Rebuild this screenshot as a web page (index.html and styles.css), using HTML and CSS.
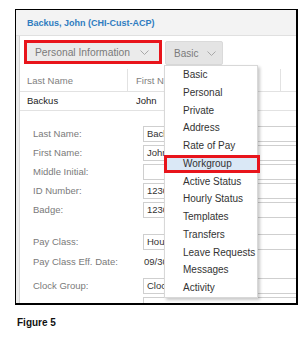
FILE: index.html
```html
<!DOCTYPE html>
<html>
<head>
  <meta charset="utf-8">
  <link rel="stylesheet" href="styles.css">
</head>
<body>
  <div class="shot">
    <div class="frame">
      <header class="titlebar">Backus, John (CHI-Cust-ACP)</header>
      <div class="panel">
        <div class="gutter"></div>
        <main class="content">
          <div class="toolbar">
            <div class="callout">
              <div class="select select-wide">
                <span>Personal Information</span>
                <svg class="chev" width="9" height="5" viewBox="0 0 9 5"><polyline points="0.5,0.5 4.5,4.5 8.5,0.5" fill="none" stroke="#a8a8a8"/></svg>
              </div>
            </div>
            <div class="select select-basic">
              <span>Basic</span>
              <svg class="chev" width="9" height="5" viewBox="0 0 9 5"><polyline points="0.5,0.5 4.5,4.5 8.5,0.5" fill="none" stroke="#a8a8a8"/></svg>
            </div>
          </div>

          <div class="grid-head">
            <div class="cell col-last">Last Name</div>
            <div class="cell col-first">First Name</div>
            <div class="cell col-rest"></div>
          </div>
          <div class="grid-row">
            <div class="cell col-last">Backus</div>
            <div class="cell col-first">John</div>
            <div class="cell col-rest"></div>
          </div>

          <div class="form">
            <div class="row"><label>Last Name:</label><span class="field">Backus</span></div>
            <div class="row"><label>First Name:</label><span class="field">John</span></div>
            <div class="row"><label>Middle Initial:</label><span class="field"></span></div>
            <div class="row"><label>ID Number:</label><span class="field">123045</span></div>
            <div class="row"><label>Badge:</label><span class="field">123045</span></div>
            <div class="row row-pay"><label>Pay Class:</label><span class="field">Hourly</span></div>
            <div class="row row-date"><label>Pay Class Eff. Date:</label><span class="value">09/30/15</span></div>
            <div class="row row-clock"><label>Clock Group:</label><span class="field">Clock 1</span></div>
            <div class="row"><label></label><span class="field"></span></div>
          </div>
        </main>
      </div>

      <ul class="menu">
        <li>Basic</li>
        <li>Personal</li>
        <li>Private</li>
        <li>Address</li>
        <li>Rate of Pay</li>
        <li class="active">Workgroup</li>
        <li>Active Status</li>
        <li>Hourly Status</li>
        <li>Templates</li>
        <li>Transfers</li>
        <li>Leave Requests</li>
        <li>Messages</li>
        <li>Activity</li>
      </ul>
    </div>
    <p class="caption">Figure 5</p>
  </div>
</body>
</html>
```

FILE: styles.css
```css
body {
  margin: 0;
  background: #fff;
  font-family: "Liberation Sans", Arial, sans-serif;
  color: #333;
}

.shot {
  padding: 9px 0 0 15px;
}

/* screenshot frame */
.frame {
  position: relative;
  width: 283px;
  height: 296px;
  box-sizing: border-box;
  border: 1px solid #000;
  border-right-width: 2px;
  border-bottom-width: 2px;
  overflow: hidden;
}

.titlebar {
  height: 25px;
  line-height: 26px;
  padding-left: 11px;
  background: #f3f3f3;
  border-bottom: 1px solid #e0e0e0;
  color: #2f7cc0;
  font-size: 9px;
  font-weight: bold;
}

.panel {
  display: flex;
  height: 100%;
}

.gutter {
  width: 3px;
  flex: none;
  background: #ececec;
  border-right: 1px solid #d4d4d4;
}

.content {
  flex: 1;
  min-width: 0;
}

/* toolbar */
.toolbar {
  display: flex;
  align-items: flex-start;
  gap: 3px;
  padding: 4px 0 0 4px;
  margin-bottom: 4px;
}

.callout {
  border: 3px solid #e8141b;
  width: 138px;
  box-sizing: border-box;
}

.select {
  display: flex;
  align-items: center;
  justify-content: space-between;
  box-sizing: border-box;
  color: #7a7a7a;
}

.select-wide {
  height: 18px;
  padding: 0 10px 0 8px;
  background: #ebebeb;
  font-size: 10.3px;
}

.select-basic {
  margin-top: 1px;
  width: 58px;
  height: 24px;
  padding: 0 6px 0 8px;
  background: #e4e4e4;
  border: 1px solid #dadada;
  border-radius: 2px;
  font-size: 10px;
}

.chev {
  display: block;
}

/* grid */
.grid-head,
.grid-row {
  display: flex;
  font-size: 9.5px;
}

.grid-head {
  height: 22px;
  line-height: 24px;
  border-bottom: 1px solid #e2e2e2;
  color: #808080;
}

.grid-row {
  height: 18px;
  line-height: 18px;
  border-bottom: 1px solid #e2e2e2;
  color: #222;
}

.cell {
  box-sizing: border-box;
  white-space: nowrap;
  overflow: hidden;
}

.col-last {
  width: 108px;
  padding-left: 7px;
}

.col-first {
  width: 153px;
  padding-left: 8px;
}

.col-rest {
  flex: 1;
}

.grid-head .col-last,
.grid-head .col-first {
  border-right: 1px solid #e2e2e2;
}

/* form */
.form {
  padding-top: 13px;
  font-size: 9.5px;
}

.row {
  display: flex;
  align-items: center;
  height: 19px;
}

.row-pay {
  margin-top: 13px;
}

.row-date {
  margin-top: 1px;
}

.row-clock {
  margin-top: 5px;
}

.row label {
  width: 110px;
  flex: none;
  padding-left: 13px;
  color: #7a7a7a;
}

.field {
  flex: 1;
  height: 16px;
  line-height: 14px;
  box-sizing: border-box;
  margin-right: -20px;
  padding-left: 3px;
  border: 1px solid #cfcfcf;
  color: #333;
}

.value {
  padding-left: 1px;
  color: #333;
}

/* dropdown menu */
.menu {
  position: absolute;
  left: 148px;
  top: 55px;
  width: 94px;
  box-sizing: border-box;
  margin: 0;
  padding: 0;
  list-style: none;
  background: #fff;
  border: 1px solid #d8d8d8;
  box-shadow: 2px 2px 3px rgba(0, 0, 0, 0.22);
  font-size: 10px;
  color: #333;
}

.menu li {
  height: 17.75px;
  line-height: 17.75px;
  padding-left: 18px;
  white-space: nowrap;
}

.menu li.active {
  position: relative;
  margin: 0 -3px 0 -1px;
  padding-left: 16px;
  box-sizing: border-box;
  line-height: 11.75px;
  border: 3px solid #e8141b;
  background: #dae8f6;
}

.caption {
  margin: 12px 0 0 2px;
  font-size: 10px;
  font-weight: bold;
  color: #111;
}
```
